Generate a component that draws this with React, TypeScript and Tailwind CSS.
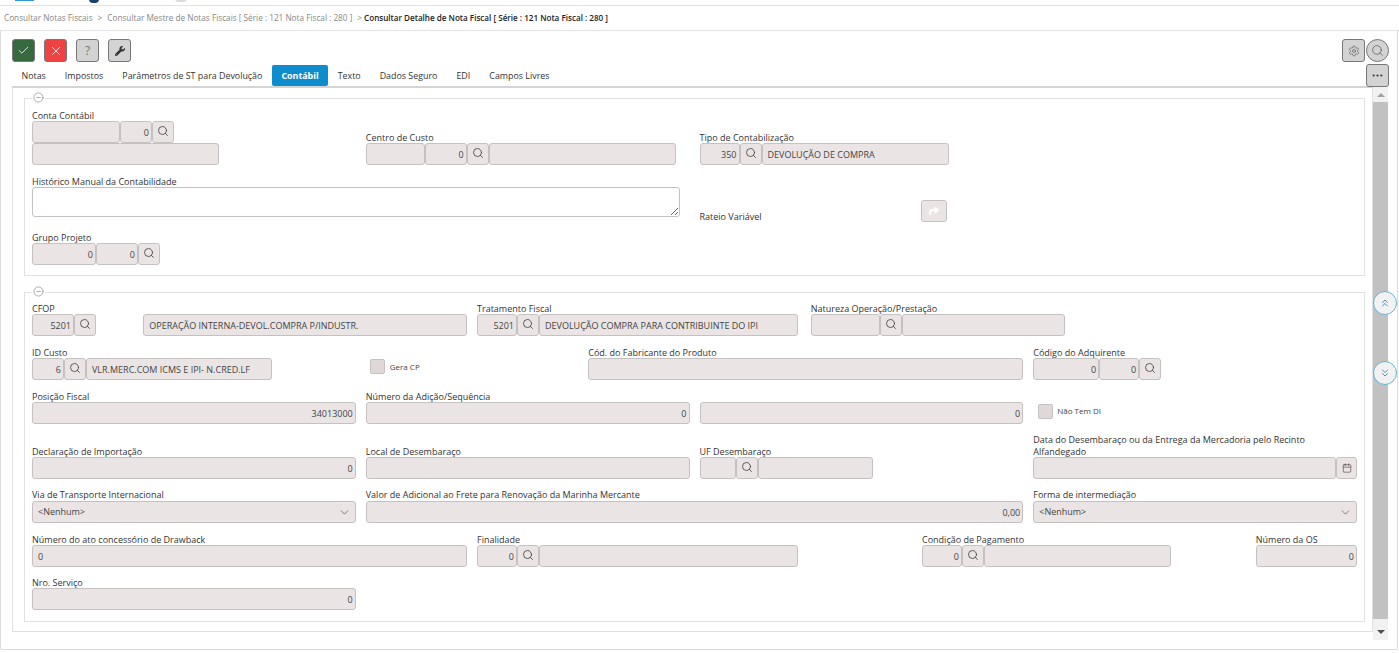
import { Check, X, Search, CircleMinus, ChevronDown, ChevronsUp, ChevronsDown, Calendar, Settings, Ellipsis } from "lucide-react";
import { FaWrench, FaShare } from "react-icons/fa";
import type { ReactNode } from "react";

const box = "h-[22px] shrink-0 rounded-[3px] border border-[#c6c1c1] bg-[#ebe4e4] text-[9px] leading-[22px] text-[#444]";

function Label({ children, className = "" }: { children: ReactNode; className?: string }) {
  return <div className={`h-[14px] whitespace-nowrap text-[9px] leading-[18px] text-[#333] ${className}`}>{children}</div>;
}

// read only input, w is a full class so tailwind can see it
function Input({ w = "w-full", value, left }: { w?: string; value?: string; left?: boolean }) {
  return <div className={`${box} ${w} whitespace-nowrap overflow-hidden ${left ? "pl-[5px] text-left" : "pr-[2px] text-right"}`}>{value}</div>;
}

function Lookup() {
  return (
    <div className={`${box} w-[22px] flex items-start justify-center pt-[3px]`}>
      <Search size={12} strokeWidth={1.7} className="text-[#444]" />
    </div>
  );
}

function Select() {
  return (
    <div className={`${box} w-full flex items-center justify-between pl-[5px] pr-[4px]`}>
      <span>&lt;Nenhum&gt;</span>
      <ChevronDown size={13} strokeWidth={1.5} className="text-[#666]" />
    </div>
  );
}

function Section({ children, className = "" }: { children: ReactNode; className?: string }) {
  return (
    <div className={`relative border border-[#e2e2e2] px-[7px] ${className}`}>
      <div className="absolute left-[7px] top-[-7px] bg-white px-px">
        <CircleMinus size={11} strokeWidth={1} className="text-[#555]" />
      </div>
      <div className="grid grid-cols-12 gap-x-[10px] gap-y-2 items-end">{children}</div>
    </div>
  );
}

function ToolButton({ className, children }: { className: string; children: ReactNode }) {
  return (
    <button className={`flex h-[23px] w-[23px] items-center justify-center rounded-[3px] border border-[#777] ${className}`}>
      {children}
    </button>
  );
}

function FloatCircle({ children, className }: { children: ReactNode; className: string }) {
  return (
    <div className={`absolute right-0 flex h-[24px] w-[24px] items-center justify-center rounded-full border border-[#63b3dc] bg-[#f2f2f2] text-[#4a90c8] ${className}`}>
      {children}
    </div>
  );
}

const tabs = ["Notas", "Impostos", "Parâmetros de ST para Devolução", "Contábil", "Texto", "Dados Seguro", "EDI", "Campos Livres"];

export default function App() {
  return (
    <div className="relative flex h-[653px] w-[1399px] flex-col overflow-hidden bg-white font-['Open_Sans',sans-serif]">
      {/* logo is cut off by the top of the window */}
      <div className="relative h-[6px] shrink-0 overflow-hidden border-b border-[#e2e2e2]">
        <div className="absolute left-[15px] top-[-4px] h-[5px] w-[19px] bg-[#2f9bd6]" />
        <div className="absolute left-[89px] top-[-5px] h-[8px] w-[10px] rounded-full bg-[#16426e]" />
        <div className="absolute left-[175px] top-[-5px] h-[7px] w-[12px] rounded-full bg-[#dcdcdc]" />
      </div>

      {/* breadcrumb */}
      <div className="flex h-[25px] shrink-0 items-center gap-[5px] whitespace-nowrap border-b border-[#e2e2e2] pl-[4px] text-[8.23px] text-[#888]">
        <span>Consultar Notas Fiscais</span>
        <span>&gt;</span>
        <span>Consultar Mestre de Notas Fiscais [ Série : 121 Nota Fiscal : 280 ]</span>
        <span>&gt;</span>
        <span className="-ml-[3px] text-[8.1px] font-semibold text-[#222]">Consultar Detalhe de Nota Fiscal [ Série : 121 Nota Fiscal : 280 ]</span>
      </div>

      <div className="relative mr-px flex h-[619px] shrink-0 flex-col rounded-b-[2px] border-x border-b border-[#dcdcdc]">
        {/* toolbar */}
        <div className="flex h-[23px] mt-2 items-center justify-between pl-[11px] pr-[8px]">
          <div className="flex gap-[9px]">
            <ToolButton className="bg-[#37693f] text-white"><Check size={13} strokeWidth={1.5} /></ToolButton>
            <ToolButton className="bg-[#f04242] text-white"><X size={14} strokeWidth={1.5} /></ToolButton>
            <ToolButton className="bg-[#d3d3d3] text-[#777] text-[12px]">?</ToolButton>
            <ToolButton className="bg-[#d3d3d3] text-[#333]"><FaWrench size={10} /></ToolButton>
          </div>
          <div className="flex gap-px">
            <ToolButton className="bg-[#d3d3d3] text-[#666]"><Settings size={12} strokeWidth={1.5} /></ToolButton>
            <div className="flex h-[23px] w-[23px] items-center justify-center rounded-full border border-[#777] bg-[#d3d3d3] text-[#555]">
              <Search size={13} strokeWidth={1.3} />
            </div>
          </div>
        </div>

        {/* tabs */}
        <div className="mt-[2px] flex h-[22px] items-end justify-between pr-[8px]">
          <div className="ml-[11px] flex h-[21px]">
            {tabs.map((t) => (
              <div
                key={t}
                className={`flex items-center rounded-[2px] px-[9.5px] text-[8.9px] whitespace-nowrap ${t === "Contábil" ? "bg-[#0f8ccb] font-bold text-white" : "text-[#333]"}`}
              >
                {t}
              </div>
            ))}
          </div>
          <ToolButton className="relative top-px bg-[#d3d3d3] text-[#333]"><Ellipsis size={13} strokeWidth={2} /></ToolButton>
        </div>

        <div className="flex">
          {/* tab panel */}
          <div className="ml-[11px] h-[546px] w-[1361px] shrink-0 border-x border-b border-t-2 border-[#e0e0e0] border-t-[#d4d4d4] pl-[11px] pr-[7px] pt-[10px]">
            <Section className="h-[178px]">
              <div className="col-span-3 col-start-1 mt-[9px]">
                <Label className="relative -top-px -mb-px">Conta Contábil</Label>
                <div className="flex">
                  <Input w="w-[88px]" />
                  <Input w="w-[32px]" value="0" />
                  <Lookup />
                </div>
                <Input w="w-[187px]" />
              </div>
              <div className="col-span-3 col-start-4">
                <Label>Centro de Custo</Label>
                <div className="flex">
                  <Input w="w-[59px]" />
                  <Input w="w-[42px]" value="0" />
                  <Lookup />
                  <Input w="w-[187px]" />
                </div>
              </div>
              <div className="col-span-3 col-start-7">
                <Label>Tipo de Contabilização</Label>
                <div className="flex">
                  <Input w="w-[40px]" value="350" />
                  <Lookup />
                  <Input w="w-[187px]" value="DEVOLUÇÃO DE COMPRA" left />
                </div>
              </div>

              <div className="col-span-6 col-start-1">
                <Label>Histórico Manual da Contabilidade</Label>
                <textarea readOnly className="block h-[30px] w-[648px] rounded-[3px] border border-[#c6c1c1] bg-white" />
              </div>
              <Label className="col-span-2 col-start-7 -mb-[5px]">Rateio Variável</Label>
              <div className="col-start-9 -mb-[5px] -ml-px flex h-[22px] w-[26px] items-center justify-center rounded-[3px] border border-[#c6c1c1] bg-[#ebe4e4] text-white">
                <FaShare size={10} />
              </div>

              <div className="col-span-3 col-start-1 mt-1">
                <Label>Grupo Projeto</Label>
                <div className="flex">
                  <Input w="w-[64px]" value="0" />
                  <Input w="w-[42px]" value="0" />
                  <Lookup />
                </div>
              </div>
            </Section>

            <Section className="mt-[16px] h-[330px]">
              {/* CFOP */}
              <div className="col-start-1 mt-[7px]">
                <Label>CFOP</Label>
                <div className="flex">
                  <Input w="w-[42px]" value="5201" />
                  <Lookup />
                </div>
              </div>
              <div className="col-span-3 col-start-2">
                <Input value="OPERAÇÃO INTERNA-DEVOL.COMPRA P/INDUSTR." left />
              </div>
              <div className="col-span-3 col-start-5">
                <Label>Tratamento Fiscal</Label>
                <div className="flex">
                  <Input w="w-[40px]" value="5201" />
                  <Lookup />
                  <Input w="w-[259px]" value="DEVOLUÇÃO COMPRA PARA CONTRIBUINTE DO IPI" left />
                </div>
              </div>
              <div className="col-span-3 col-start-8">
                <Label>Natureza Operação/Prestação</Label>
                <div className="flex">
                  <Input w="w-[69px]" />
                  <Lookup />
                  <Input w="w-[163px]" />
                </div>
              </div>

              {/* ID Custo */}
              <div className="col-span-3 col-start-1">
                <Label>ID Custo</Label>
                <div className="flex">
                  <Input w="w-[32px]" value="6" />
                  <Lookup />
                  <Input w="w-[186px]" value="VLR.MERC.COM ICMS E IPI- N.CRED.LF" left />
                </div>
              </div>
              <div className="col-span-2 col-start-4 flex h-[22px] items-center self-end pl-[4px]">
                <div className="mb-[5px] h-[15px] w-[15px] rounded-[2px] border border-[#c6c1c1] bg-[#e0d8d8]" />
                <span className="mb-[5px] ml-[5px] text-[8px] text-[#444]">Gera CP</span>
              </div>
              <div className="col-span-4 col-start-6">
                <Label>Cód. do Fabricante do Produto</Label>
                <Input />
              </div>
              <div className="col-span-3 col-start-10">
                <Label>Código do Adquirente</Label>
                <div className="flex">
                  <Input w="w-[66px]" value="0" />
                  <Input w="w-[40px]" value="0" />
                  <Lookup />
                </div>
              </div>

              {/* Posicao fiscal */}
              <div className="col-span-3 col-start-1">
                <Label>Posição Fiscal</Label>
                <Input value="34013000" />
              </div>
              <div className="col-span-3 col-start-4">
                <Label>Número da Adição/Sequência</Label>
                <Input value="0" />
              </div>
              <div className="col-span-3 col-start-7">
                <Input value="0" />
              </div>
              <div className="col-span-3 col-start-10 flex h-[22px] items-center pl-[5px]">
                <div className="mb-[4px] h-[15px] w-[15px] rounded-[2px] border border-[#c6c1c1] bg-[#e0d8d8]" />
                <span className="mb-[4px] ml-[4px] text-[8px] text-[#444]">Não Tem DI</span>
              </div>

              {/* Declaracao */}
              <div className="col-span-3 col-start-1">
                <Label>Declaração de Importação</Label>
                <Input value="0" />
              </div>
              <div className="col-span-3 col-start-4">
                <Label>Local de Desembaraço</Label>
                <Input />
              </div>
              <div className="col-span-3 col-start-7">
                <Label>UF Desembaraço</Label>
                <div className="flex">
                  <Input w="w-[36px]" />
                  <Lookup />
                  <Input w="w-[115px]" />
                </div>
              </div>
              <div className="col-span-3 col-start-10">
                <div className="relative top-[2px] text-[9px] leading-[12px] text-[#333]">
                  Data do Desembaraço ou da Entrega da Mercadoria pelo Recinto Alfandegado
                </div>
                <div className="mt-px flex">
                  <Input w="w-[303px]" />
                  <div className={`${box} w-[21px] flex items-center justify-center`}>
                    <Calendar size={10} strokeWidth={1.5} />
                  </div>
                </div>
              </div>

              {/* Via transporte */}
              <div className="col-span-3 col-start-1">
                <Label className="relative -top-px">Via de Transporte Internacional</Label>
                <Select />
              </div>
              <div className="col-span-6 col-start-4">
                <Label className="relative -top-px">Valor de Adicional ao Frete para Renovação da Marinha Mercante</Label>
                <Input value="0,00" />
              </div>
              <div className="col-span-3 col-start-10">
                <Label className="relative -top-px">Forma de intermediação</Label>
                <Select />
              </div>

              {/* Ato */}
              <div className="col-span-4 col-start-1">
                <Label>Número do ato concessório de Drawback</Label>
                <Input value="0" left />
              </div>
              <div className="col-span-3 col-start-5">
                <Label>Finalidade</Label>
                <div className="flex">
                  <Input w="w-[40px]" value="0" />
                  <Lookup />
                  <Input w="w-[259px]" />
                </div>
              </div>
              <div className="col-span-3 col-start-9">
                <Label>Condição de Pagamento</Label>
                <div className="flex">
                  <Input w="w-[40px]" value="0" />
                  <Lookup />
                  <Input w="w-[187px]" />
                </div>
              </div>
              <div className="col-start-12">
                <Label>Número da OS</Label>
                <Input value="0" />
              </div>

              {/* Servico */}
              <div className="col-span-3 col-start-1">
                <Label className="-mt-px">Nro. Serviço</Label>
                <Input value="0" />
              </div>
            </Section>
          </div>

          {/* scrollbar */}
          <div className="mt-px flex h-[553px] w-[15px] shrink-0 flex-col items-center bg-[#f1f1f1]">
            <div className="mb-[5px] mt-[6px] h-0 w-0 border-x-[4px] border-b-[4px] border-x-transparent border-b-[#a3a3a3]" />
            <div className="h-[517px] w-full bg-[#c1c1c1]" />
            <div className="mt-[11px] h-0 w-0 border-x-[4px] border-t-[4px] border-x-transparent border-t-[#505050]" />
          </div>
        </div>

        <FloatCircle className="top-[260px]"><ChevronsUp size={12} strokeWidth={2} /></FloatCircle>
        <FloatCircle className="top-[330px]"><ChevronsDown size={12} strokeWidth={2} /></FloatCircle>
      </div>
    </div>
  );
}
